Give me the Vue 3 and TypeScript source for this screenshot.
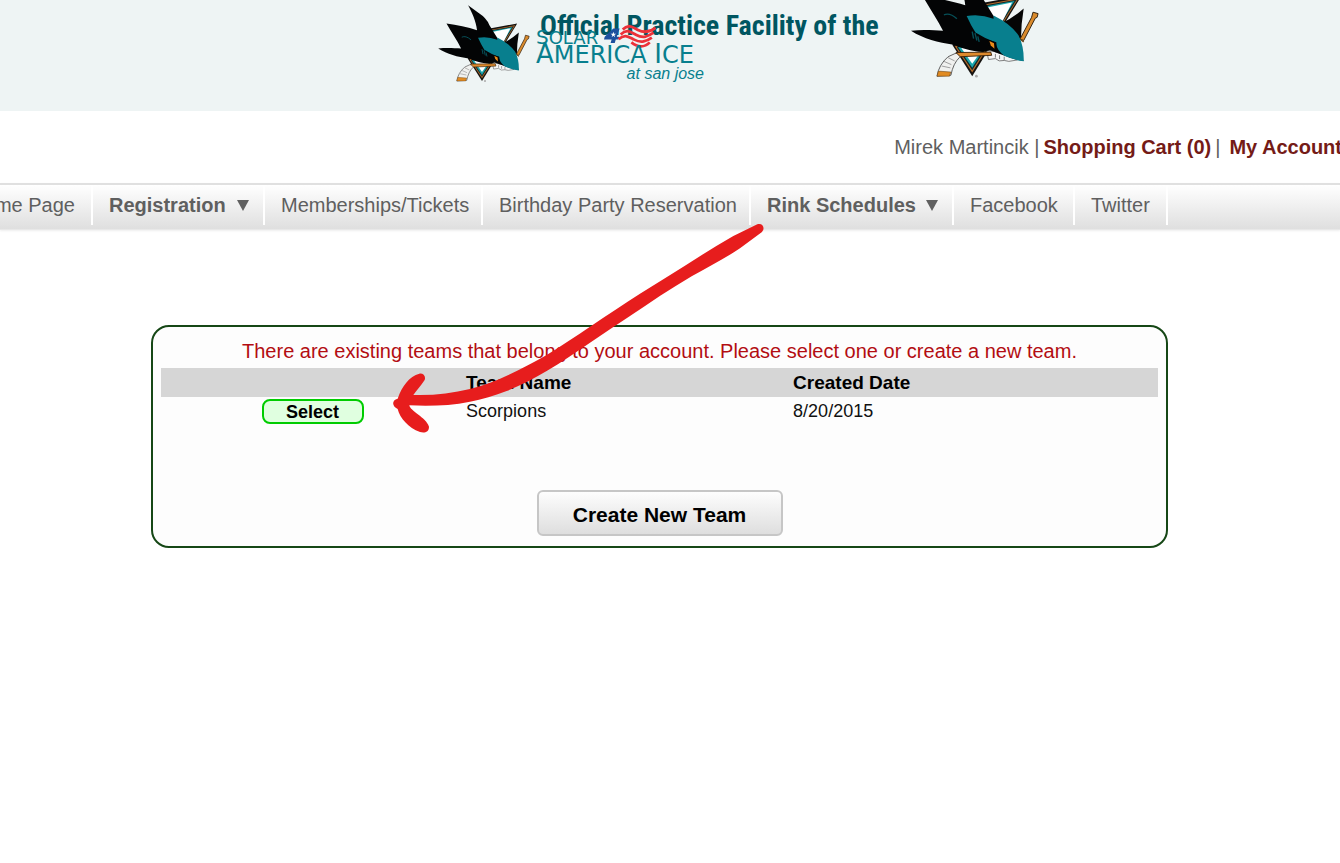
<script setup lang="ts">
interface NavItem { label: string; menu?: boolean }
interface Team { name: string; created: string }

const navItems: NavItem[] = [
  { label: 'Home Page' },
  { label: 'Registration', menu: true },
  { label: 'Memberships/Tickets' },
  { label: 'Birthday Party Reservation' },
  { label: 'Rink Schedules', menu: true },
  { label: 'Facebook' },
  { label: 'Twitter' },
]
const teams: Team[] = [{ name: 'Scorpions', created: '8/20/2015' }]
</script>

<template>
  <div class="page">
    <svg class="defs" aria-hidden="true">
      <symbol id="shark" viewBox="25 15 276 235">
        <path d="M172 87 L263 71 L157 244 L114 176 Z" fill="#15120f" />
        <path d="M180 90 L257 76 L157 236 L120 180 Z" fill="#b66b2a" />
        <path d="M180 92 L253 79 L157 231 L124 182 Z" fill="#102b2e" />
        <path d="M182 94 L248 82 L157 226 L127 182 Z" fill="#1aa6ac" />
        <path d="M184 97 L243 85 L222 126 L157 217 L134 184 Z" fill="#fff" />
        <path d="M268 98 Q262 133 262 166 L220 130 Q248 116 268 98Z" fill="#050505" />
        <path d="M288 106 L299 109 L297 117 L293 119 L268 167 L260 164 L285 117Z" fill="#d98a2c" stroke="#2a1c0c" stroke-width="2" />
        <path d="M258 162 L268 170" stroke="#6b4518" stroke-width="3" />
        <path d="M105 202 Q119 193 136 193 L130 203 Q116 216 111 242 L81 244 Q85 219 105 202Z" fill="#f0f1ef" stroke="#555" stroke-width="2" />
        <path d="M96 212 L112 219 M91 222 L110 226 M105 204 L119 211" stroke="#999" stroke-width="2" />
        <path d="M84 233 L111 235 L108 244 L81 244Z" fill="#e18b22" stroke="#4d2d0b" />
        <path d="M188 188 Q220 192 254 209 L236 212 L226 210 L215 211 L207 206 L192 208Z" fill="#f5f5f5" stroke="#777" stroke-width="2" />
        <path d="M207 196 V204 M216 199 V207 M226 202 V209" stroke="#777" stroke-width="2" />
        <path d="M115 16 L148 40 Q170 54 179 75 L204 116 L240 150 L268 211 C240 207 214 194 195 188 L180 192 C155 190 132 183 117 176 C83 171 53 164 25 146 C50 143 74 145 94 146 C82 122 65 97 50 71 C82 76 114 82 142 91 C139 64 127 38 115 16Z" fill="#030405" />
        <path d="M145 114 Q175 109 203 120 L203 113 Q240 131 257 156 Q269 180 268 212 Q246 209 226 200 Q210 188 207 171 Q186 164 164 150 Q154 134 145 114Z" fill="#087f8e" />
        <path d="M188 165 L209 171 L210 186 L193 177Z" fill="#050505" />
        <path d="M194 168 L204 173 L205 185 L197 178Z" fill="#e98a19" />
        <path d="M96 112 Q108 106 124 120 M157 148 L160 163 M163 151 L167 167 M169 158 L172 170" fill="none" stroke="#064f57" stroke-width="3" />
        <path d="M122 193 L197 192 L199 199 L131 202Z" fill="#df8a2d" stroke="#3c240b" stroke-width="2" />
        <circle cx="166" cy="244" r="3" fill="#aaa" />
      </symbol>
    </svg>

    <header class="banner">
      <svg class="shark" role="img" aria-label="Shark"><use href="#shark" /></svg>
      <div class="brand">
        <h1>Official Practice Facility of the</h1>
        <div class="rink">
          <div class="solar">
            <span><b>S</b>OLAR</span>
            <svg class="flag" viewBox="0 0 150 66" aria-hidden="true">
              <path d="M27 10 L45 10 L37 34 L44 34 L42 42 L34 42 L31 52 L19 52 L22 42 L0 42 L2 34Z" fill="#1c4f9e" />
              <path d="M27 19 L29 25 L35 25 L30 29 L32 35 L27 31 L22 35 L24 29 L19 25 L25 25Z" fill="#fff" />
              <g fill="none" stroke="#ec3139" stroke-width="8">
                <path d="M54 13 C72 -4 82 6 98 14 C119 25 134 19 149 8" />
                <path d="M48 27 C66 10 77 20 92 28 C113 39 127 33 143 22" />
                <path d="M42 41 C60 24 71 34 87 42 C108 53 122 47 138 36" />
                <path d="M79 50 C96 64 116 66 132 50" />
              </g>
            </svg>
          </div>
          <div class="america"><b>A</b>MERICA <b>I</b>CE</div>
          <div class="city">at san jose</div>
        </div>
      </div>
      <svg class="shark large" role="img" aria-label="Shark"><use href="#shark" /></svg>
    </header>

    <div class="account">
      <span>Mirek Martincik |</span>
      <a href="#">Shopping Cart (0)</a>
      <span>|</span>
      <a class="mine" href="#">My Account</a>
    </div>

    <nav>
      <a v-for="item in navItems" :key="item.label" href="#" :class="{ menu: item.menu }">
        {{ item.label }}
        <svg v-if="item.menu" viewBox="0 0 12 11" aria-hidden="true"><path d="M0 0H12L6 11Z" fill="#606060" /></svg>
      </a>
    </nav>

    <main>
      <p>There are existing teams that belong to your account. Please select one or create a new team.</p>
      <table>
        <thead>
          <tr><th class="pick"></th><th class="name">Team Name</th><th>Created Date</th></tr>
        </thead>
        <tbody>
          <tr v-for="team in teams" :key="team.name">
            <td class="pick"><button class="select" type="button">Select</button></td>
            <td>{{ team.name }}</td>
            <td>{{ team.created }}</td>
          </tr>
        </tbody>
      </table>
      <button class="create" type="button">Create New Team</button>
    </main>

    <svg class="arrow" viewBox="0 0 1200 720" aria-hidden="true">
      <path d="M1132 43 C1150 38 1156 57 1145 67 L1080 115 C1030 148 985 171 935 199 C870 237 810 278 750 318 C710 345 670 371 630 398 C590 425 545 456 500 483 C460 507 420 527 380 543 C345 557 305 568 270 575 C210 587 150 589 88 586 C89 602 138 622 147 650 C147 666 134 670 120 666 C85 653 60 625 53 597 C36 589 34 571 53 566 C65 530 88 498 118 491 C130 489 138 499 134 510 C122 529 110 541 100 555 C160 557 215 550 270 537 C310 527 348 513 385 495 C425 476 463 457 500 435 C545 407 590 377 630 350 C657 332 683 314 710 297 C757 266 803 237 850 208 C920 164 990 118 1060 78Z" fill="#e71d1d" />
    </svg>
  </div>
</template>

<style>
body { margin: 0; background: #fff; }
</style>

<style scoped>
.page {
  position: relative;
  min-height: 100vh;
  overflow: hidden;
  font-family: "Liberation Sans", Arial, sans-serif;
  font-size: 20px;
  color: #5f5f5f;
}
a { color: inherit; text-decoration: none; }
.defs { position: absolute; width: 0; height: 0; }
.banner {
  display: flex;
  align-items: flex-start;
  height: 111px;
  padding-left: 438px;
  overflow: hidden;
  background: #eef4f4;
}
.shark { flex: none; width: 92px; height: 78px; margin-top: 5px; }
.shark.large { width: 128px; height: 109px; margin-top: -30px; }
.brand { position: relative; flex: none; width: 381px; padding-left: 10px; box-sizing: border-box; }
h1 {
  margin: 8px 0 0;
  font: 700 28px/36px "Liberation Sans Narrow", "Roboto Condensed", "Open Sans Condensed", "Liberation Sans", sans-serif;
  color: #005661;
  white-space: nowrap;
}
.rink { position: absolute; left: 6px; top: 25px; width: 168px; color: #087f8e; }
.rink b { font-weight: 400; }
.solar { display: flex; height: 19px; font: 18px/24px "DejaVu Sans", sans-serif; }
.solar b { font-size: 20px; }
.flag { width: 52px; height: 23px; margin-left: 6px; flex: none; }
.america { font: 24px/20px "DejaVu Sans", sans-serif; white-space: nowrap; }
.america b { font-size: 26px; }
.city { font: italic 16px/18px "Liberation Sans", sans-serif; text-align: right; }
.account {
  display: flex;
  justify-content: flex-end;
  gap: 4px;
  height: 72px;
  line-height: 72px;
  margin-right: -2px;
  white-space: nowrap;
}
.account a { color: #741b17; font-weight: 700; }
.account .mine { margin-left: 5px; }
nav {
  display: grid;
  grid-template-columns: 93px 172px 218px 268px 203px 121px 93px;
  height: 47px;
  border-top: 2px solid #e0e0e0;
  border-bottom: 1px solid #e8e8e8;
  background: linear-gradient(#fff, #dfdfdf);
  box-sizing: border-box;
  margin-bottom: 95px;
  box-shadow: 0 1px 2px #eee;
}
nav a {
  display: flex;
  align-items: center;
  height: 40px;
  padding: 0 16px;
  border-right: 2px solid #fff;
  white-space: nowrap;
  box-sizing: border-box;
}
nav a:first-child { justify-content: flex-end; }
nav .menu { font-weight: 700; justify-content: space-between; padding-right: 14px; }
nav svg { width: 12px; height: 11px; }
main {
  margin: 0 172px 0 151px;
  padding: 10px 8px;
  border: 2px solid #164716;
  border-radius: 18px;
  background: #fdfdfd;
  text-align: center;
}
p { margin: 0 0 3px; line-height: 28px; color: #b30d12; }
table { width: 100%; border-collapse: collapse; table-layout: fixed; color: #000; text-align: left; }
th { height: 29px; padding: 0 2px; background: #d6d6d6; font-size: 19px; line-height: 29px; }
td { height: 29px; padding: 0 2px; font-size: 18px; color: #111; }
.pick { width: 30%; text-align: center; }
.name { width: 323px; }
button { font-family: inherit; font-weight: 700; color: #000; }
.select {
  display: block;
  width: 102px;
  height: 25px;
  margin: 0 auto;
  padding: 0;
  border: 2px solid #0c0;
  border-radius: 8px;
  background: #e0ffe0;
  font-size: 18px;
  line-height: 20px;
}
.create {
  display: block;
  width: 246px;
  height: 46px;
  margin: 64px auto 0;
  padding: 4px 0 0;
  border: 2px solid #c6c6c6;
  border-radius: 6px;
  background: linear-gradient(#fdfdfd, #dedede);
  font-size: 21px;
}
.arrow { position: absolute; left: 380px; top: 210px; width: 400px; height: 240px; pointer-events: none; }
</style>
